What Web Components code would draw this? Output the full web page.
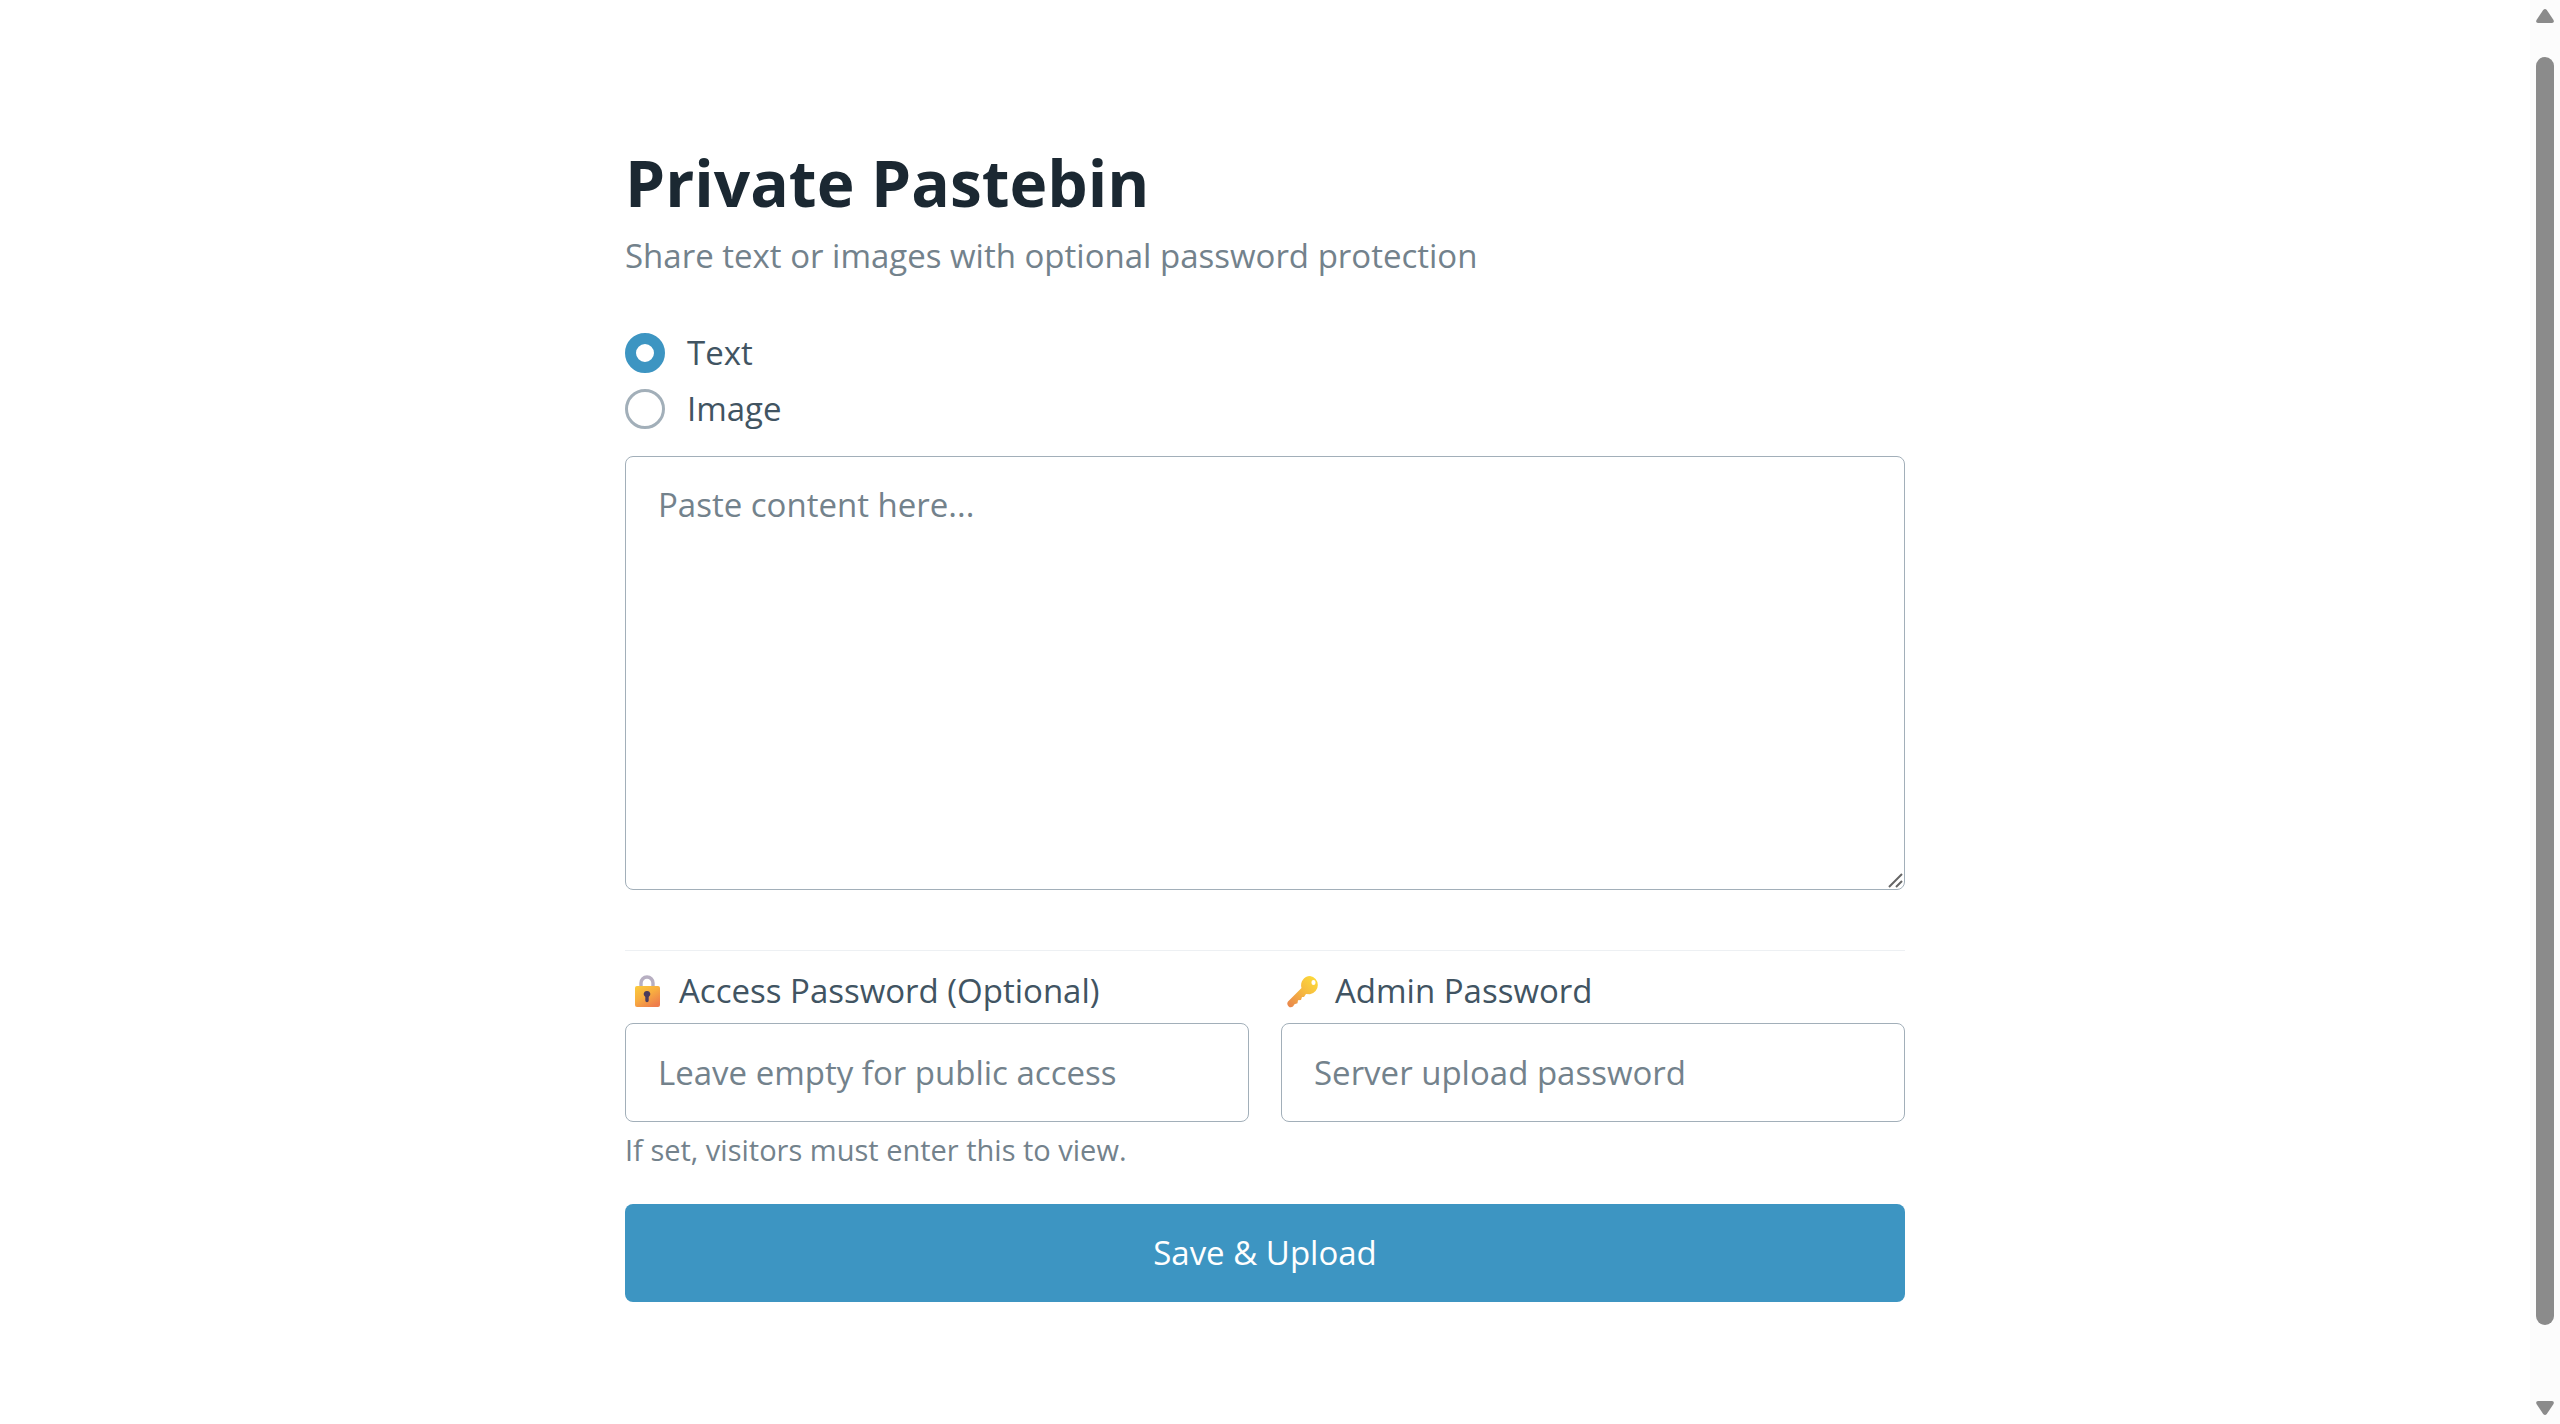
<!DOCTYPE html>
<html lang="en">
<head>
<meta charset="utf-8">
<title>Private Pastebin</title>
<style>
  :root {
    --primary: #3d95c2;
    --heading: #1b2832;
    --text: #415462;
    --muted: #73828c;
    --border: #a2afb9;
    --rule: #edf0f3;
    --body-size: 33px;
    --line: 50px;
  }
  body {
    margin: 0;
    min-height: 100vh;
    display: flex;
    background: #fff;
    color: var(--text);
    font: var(--body-size)/var(--line) "Segoe UI", "Open Sans", "Noto Sans", sans-serif;
  }
</style>
</head>
<body>
<paste-page></paste-page>
<page-scrollbar></page-scrollbar>

<script>
class BaseElement extends HTMLElement {
  render(html) {
    this.attachShadow({ mode: "open" }).innerHTML = html;
  }
}

customElements.define("page-scrollbar", class extends BaseElement {
  connectedCallback() {
    this.render(`
      <style>
        :host { display: flex; flex-direction: column; align-items: center; box-sizing: border-box; flex: none;
          width: 30px; height: 100vh; padding: 9px 0; background: #fcfcfc; position: sticky; top: 0; }
        svg { display: block; width: 18px; height: 14px; fill: #8b8b8b; flex: none; }
        .track { flex: 1; width: 18px; padding: 34px 0 76px; display: flex; }
        .thumb { flex: 1; background: #8b8b8b; border-radius: 9px; }
      </style>
      <svg viewBox="0 0 18 14" aria-hidden="true"><path d="M7.2 1.1Q9-.9 10.8 1.1L17.5 11Q18.6 13.7 16 14H2Q-.6 13.7.5 11Z"/></svg>
      <div class="track"><div class="thumb"></div></div>
      <svg viewBox="0 0 18 14" aria-hidden="true"><path d="M7.2 12.9Q9 14.9 10.8 12.9L17.5 3Q18.6.3 16 0H2Q-.6.3.5 3Z"/></svg>`);
  }
});

customElements.define("page-header", class extends BaseElement {
  connectedCallback() {
    this.render(`
      <style>
        :host { display: flex; flex-direction: column; gap: 7px; }
        h1 { margin: 0; color: var(--heading); font-size: 64px; line-height: 82px; font-weight: 700; }
        p { margin: 0; color: var(--muted); }
      </style>
      <h1><slot name="title"></slot></h1>
      <p><slot></slot></p>`);
  }
});

customElements.define("type-picker", class extends BaseElement {
  connectedCallback() {
    this.render(`
      <style>
        :host { display: block; }
        fieldset { border: 0; margin: 0; padding: 0; display: flex; flex-direction: column; align-items: flex-start; gap: 6px; }
        label { display: flex; align-items: center; gap: 22px; cursor: pointer; }
        input { appearance: none; box-sizing: border-box; width: 40px; height: 40px; margin: 0;
          border: 3px solid var(--border); border-radius: 50%; background: #fff; }
        input:checked { border: 11px solid var(--primary); }
      </style>
      <fieldset aria-label="Content type">
        <label for="text"><input id="text" type="radio" name="type" value="text" checked>Text</label>
        <label for="image"><input id="image" type="radio" name="type" value="image">Image</label>
      </fieldset>`);
  }
});

customElements.define("content-box", class extends BaseElement {
  connectedCallback() {
    this.render(`
      <style>
        :host { display: block; position: relative; }
        textarea { display: block; box-sizing: border-box; width: 100%; height: 434px; margin: 0;
          padding: 23px 32px; border: 1px solid var(--border); border-radius: 8px; background: #fff;
          font: inherit; color: var(--text); resize: none; outline: none; }
        textarea::placeholder { color: var(--muted); opacity: 1; }
        svg { position: absolute; right: 2px; bottom: 2px; width: 15px; height: 15px; stroke: #666; stroke-width: 2; fill: none; pointer-events: none; }
      </style>
      <textarea aria-label="Content" placeholder="Paste content here..."></textarea>
      <svg viewBox="0 0 15 15" aria-hidden="true"><path d="M1 14 14 1M8 14l6-6"/></svg>`);
  }
});

customElements.define("password-field", class extends BaseElement {
  connectedCallback() {
    this.render(`
      <style>
        :host { display: flex; flex-direction: column; flex: 1 1 0; min-width: 0; }
        label { display: flex; align-items: center; margin-bottom: 7px; gap: 10px; }
        ::slotted(svg) { display: block; width: 44px; height: 44px; flex: none; }
        input { box-sizing: border-box; width: 100%; height: 99px; margin: 0; padding: 0 32px;
          border: 1px solid var(--border); border-radius: 8px; background: #fff; font: inherit; color: var(--text); outline: none; }
        input::placeholder { color: var(--muted); opacity: 1; }
        small { display: block; margin-top: 7px; font-size: 29px; line-height: 42px; color: var(--muted); }
      </style>
      <label for="field"><slot name="icon"></slot><span>${this.getAttribute("label")}</span></label>
      <input id="field" type="password" placeholder="${this.getAttribute("placeholder")}">
      ${this.hasAttribute("hint") ? `<small>${this.getAttribute("hint")}</small>` : ""}`);
  }
});

customElements.define("submit-button", class extends BaseElement {
  connectedCallback() {
    this.render(`
      <style>
        :host { display: block; }
        button { display: block; width: 100%; height: 98px; margin: 0; padding: 0; border: 0; border-radius: 8px;
          background: var(--primary); color: #fff; font: inherit; cursor: pointer; }
      </style>
      <button type="button"><slot></slot></button>`);
  }
});

customElements.define("paste-page", class extends BaseElement {
  connectedCallback() {
    this.render(`
      <style>
        :host { display: block; flex: 1; min-width: 0; }
        main { box-sizing: border-box; max-width: 1280px; margin: 0 auto; padding: 142px 0 120px; }
        page-header { margin-bottom: 47px; }
        type-picker { margin-bottom: 22px; }
        hr { margin: 60px 0 15px; border: 0; border-top: 1px solid var(--rule); }
        .row { display: flex; align-items: flex-start; gap: 32px; margin-bottom: 33px; }
      </style>
      <main>
        <page-header><span slot="title">Private Pastebin</span>Share text or images with optional password protection</page-header>
        <type-picker></type-picker>
        <content-box></content-box>
        <hr>
        <div class="row">
          <password-field label="Access Password (Optional)" placeholder="Leave empty for public access" hint="If set, visitors must enter this to view.">
            <svg slot="icon" viewBox="0 -1 44 44" aria-hidden="true">
              <defs><linearGradient id="lock" x1="0" y1="0" x2=".7" y2="1"><stop stop-color="#fbcb3c"/><stop offset=".5" stop-color="#f8ae40"/><stop offset="1" stop-color="#ee7d4c"/></linearGradient></defs>
              <path d="M16 18v-5a6 6 0 0 1 12 0v5" fill="none" stroke="#b7afc2" stroke-width="3.4"/>
              <rect x="10" y="16" width="25" height="21" rx="2" fill="url(#lock)"/>
              <path d="M22 21a3.200 3.200 0 0 1 1.700 6v3.500a1.700 1.700 0 0 1-3.400 0V27a3.200 3.200 0 0 1 1.700-6z" fill="#4a3c5c"/>
            </svg>
          </password-field>
          <password-field label="Admin Password" placeholder="Server upload password">
            <svg slot="icon" viewBox="0 -1 44 44" aria-hidden="true">
              <defs><linearGradient id="key" x1="1" y1="0" x2="0" y2="1"><stop stop-color="#fde03a"/><stop offset=".5" stop-color="#f6b840"/><stop offset="1" stop-color="#e8834e"/></linearGradient></defs>
              <path fill="url(#key)" fill-rule="evenodd" d="M29 6a9.200 9.200 0 0 1 0 18.200l-4-.2-2 3h-2l-1 3-3 .3-.5 3-3 1-1.500 2.300a3.600 3.600 0 0 1-5-5L20.500 18A9.200 9.200 0 0 1 29 6zm3.500 4a2 2 0 0 0-2 2v1a2 2 0 0 0 4 0v-1a2 2 0 0 0-2-2z"/>
            </svg>
          </password-field>
        </div>
        <submit-button>Save &amp; Upload</submit-button>
      </main>`);
  }
});
</script>
</body>
</html>
